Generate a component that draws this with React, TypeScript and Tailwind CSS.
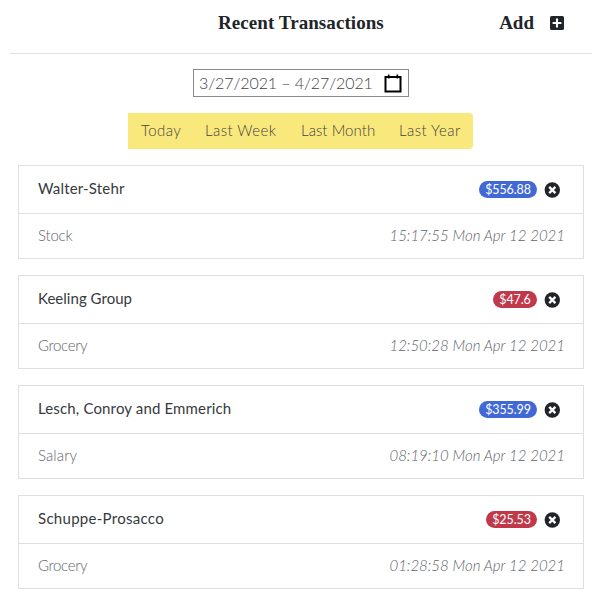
type Transaction = {
  name: string;
  nameSpacing: string;
  category: string;
  categorySpacing: string;
  amount: string;
  amountWidth: string;
  income: boolean;
  time: string;
};

const transactions: Transaction[] = [
  { name: "Walter-Stehr", nameSpacing: "tracking-[0.17px]", category: "Stock", categorySpacing: "tracking-[-0.2px]", amount: "$556.88", amountWidth: "w-[58px]", income: true, time: "15:17:55 Mon Apr 12 2021" },
  { name: "Keeling Group", nameSpacing: "tracking-[0.03px]", category: "Grocery", categorySpacing: "tracking-[-0.35px]", amount: "$47.6", amountWidth: "w-[44px]", income: false, time: "12:50:28 Mon Apr 12 2021" },
  { name: "Lesch, Conroy and Emmerich", nameSpacing: "tracking-[0.15px]", category: "Salary", categorySpacing: "tracking-[0.1px]", amount: "$355.99", amountWidth: "w-[58px]", income: true, time: "08:19:10 Mon Apr 12 2021" },
  { name: "Schuppe-Prosacco", nameSpacing: "tracking-[0.29px]", category: "Grocery", categorySpacing: "tracking-[-0.35px]", amount: "$25.53", amountWidth: "w-[51px]", income: false, time: "01:28:58 Mon Apr 12 2021" },
];

function PlusSquare() {
  return (
    <svg className="mb-[2px] ml-4 h-[14px] w-[14px]" viewBox="0 0 14 14">
      <rect width="14" height="14" rx="1.6" fill="#212529" />
      <path d="M7 2.6v8.8M2.6 7h8.8" stroke="#fff" strokeWidth="2.1" />
    </svg>
  );
}

function CalendarIcon() {
  return (
    <svg className="h-[19px] w-[18px]" viewBox="0 0 18 19" fill="none" stroke="#000" strokeWidth="2">
      <path d="M1.5 3h15v14.5h-15z" />
      <path d="M4.7 0.5v4M13.3 0.5v4" strokeWidth="1.6" />
    </svg>
  );
}

function CloseCircle() {
  return (
    <svg className="ml-[7px] h-4 w-4" viewBox="0 0 16 16">
      <circle cx="8.3" cy="8" r="7.7" fill="#212529" />
      <path d="M5.2 4.9l6.2 6.2M11.4 4.9l-6.2 6.2" stroke="#fff" strokeWidth="2.3" />
    </svg>
  );
}

function TransactionCard({ item }: { item: Transaction }) {
  return (
    <section className="h-[94px] border border-[#dfdfdf]">
      <div className="flex h-[48px] items-center border-b border-[#dfdfdf] pl-[19px] pr-[23px]">
        <h2 className={`mr-auto whitespace-nowrap pb-[2px] text-[15px] text-[#363a3e] ${item.nameSpacing}`}>{item.name}</h2>
        <span className={`flex h-[17px] items-center justify-center rounded-full pt-[2px] text-[12.5px] tracking-[-0.1px] text-white ${item.amountWidth} ${item.income ? "bg-[#4169d5]" : "bg-[#c0394b]"}`}>
          {item.amount}
        </span>
        <CloseCircle />
      </div>
      <div className="flex h-[44px] items-center justify-between pb-[1px] pl-[19px] pr-[18px] text-[15px] font-light text-[#5f656b]">
        <span className={item.categorySpacing}>{item.category}</span>
        <em className="whitespace-nowrap">{item.time}</em>
      </div>
    </section>
  );
}

export default function App() {
  return (
    <main className="h-[600px] w-[600px] overflow-hidden bg-white font-[Lato,sans-serif]">
      <header className="ml-[10px] mr-[8px] flex h-[54px] items-center border-b border-[#dfe2e2] pb-[6px] font-['Liberation_Serif',serif] text-[19px] font-bold text-[#212529]">
        <h1 className="ml-[208px] whitespace-nowrap tracking-[0.07px]">Recent Transactions</h1>
        <div className="ml-auto mr-[28px] flex items-center">
          <span>Add</span>
          <PlusSquare />
        </div>
      </header>
      <div className="ml-[193px] mt-[15px] flex h-[28px] w-[216px] items-center justify-between border border-[#8b8b8b] pl-[5px] pr-[6px] text-[16px] font-light text-[#444]">
        <span className="whitespace-nowrap tracking-[-0.09px]">3/27/2021 – 4/27/2021</span>
        <CalendarIcon />
      </div>
      <nav className="ml-[128px] mt-[16px] flex h-[36px] w-[345px] items-center rounded-r-[4px] bg-[#f9e87b] pb-[1px] pl-[13px] text-[15px] font-light text-[#444]">
        <span className="w-[64px] tracking-[0.4px]">Today</span>
        <span className="w-[96px] tracking-[0.45px]">Last Week</span>
        <span className="w-[98px] tracking-[0.05px]">Last Month</span>
        <span className="tracking-[0.45px]">Last Year</span>
      </nav>
      <div className="ml-[18px] mt-[16px] flex w-[566px] flex-col gap-[16px]">
        {transactions.map((item) => (
          <TransactionCard key={item.name} item={item} />
        ))}
      </div>
    </main>
  );
}
